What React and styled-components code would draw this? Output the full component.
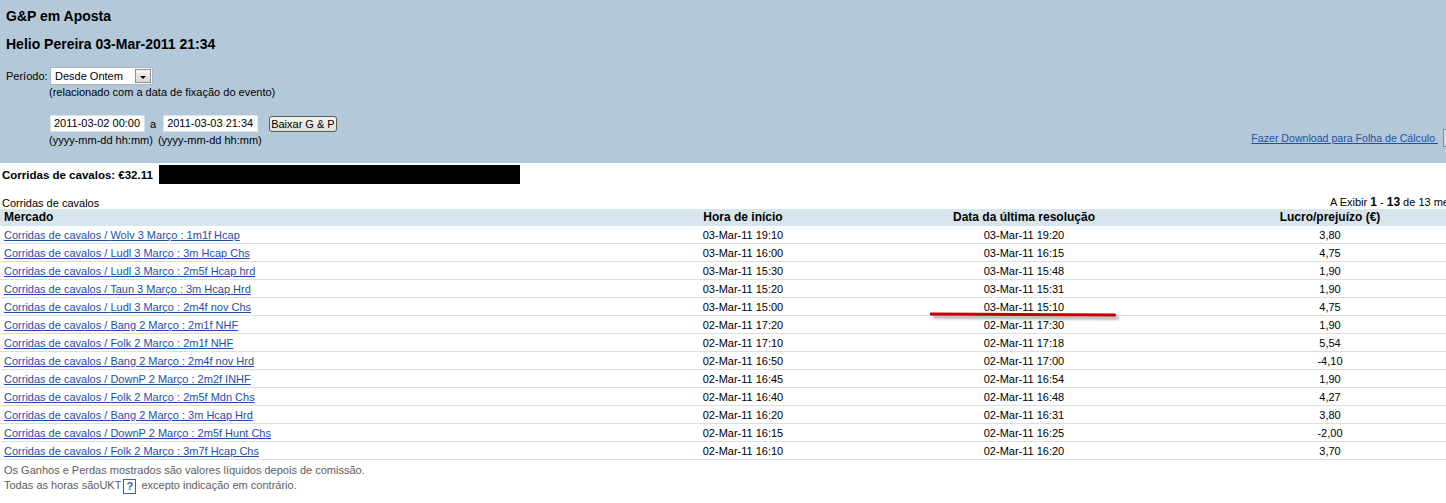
import React from "react";
import styled, { createGlobalStyle } from "styled-components";

const Global = createGlobalStyle`
  html, body { margin: 0; padding: 0; background: #fff; }
  body { font-family: "Liberation Sans", Arial, sans-serif; font-size: 11px; color: #000; overflow: hidden; width: 1446px; }
`;

const Page = styled.div`
  position: relative;
  width: 1446px;
  height: 503px;
  overflow: hidden;
`;

const Header = styled.div`
  background: #b3c9da;
  height: 163px;
  padding: 8px 6px 0 6px;
  box-sizing: border-box;
  position: relative;
`;

const Title = styled.div`
  font-size: 14px;
  font-weight: bold;
  line-height: 16px;
  margin-top: ${(p) => p.$mt || 0}px;
`;

const Row = styled.div`
  display: flex;
  align-items: center;
  gap: ${(p) => p.$gap || 0}px;
  margin-top: ${(p) => p.$mt || 0}px;
  padding-left: ${(p) => p.$pl || 0}px;
  height: ${(p) => p.$h || 14}px;
`;

const Label = styled.span`
  line-height: 14px;
  width: ${(p) => (p.$w ? p.$w + "px" : "auto")};
`;

const Sep = styled.span`
  line-height: 14px;
  margin: 0 7px 0 5px;
`;

const Spacer = styled.span`
  width: ${(p) => p.$w}px;
`;

const Select = styled.div`
  width: 103px;
  height: 18px;
  background: #fff;
  border: 1px solid #a5b6c4;
  box-sizing: border-box;
  display: flex;
  align-items: center;
  justify-content: space-between;
  padding: 0 1px 0 4px;
`;

const SelectBtn = styled.div`
  width: 16px;
  height: 14px;
  background: linear-gradient(#f4f4f4, #d8d8d8);
  border: 1px solid #8e8e8e;
  box-sizing: border-box;
  display: flex;
  align-items: center;
  justify-content: center;
`;

const Arrow = styled.div`
  width: 0;
  height: 0;
  border-left: 3px solid transparent;
  border-right: 3px solid transparent;
  border-top: 3px solid #000;
  margin-top: 2px;
`;

const Input = styled.div`
  width: 95px;
  height: 17px;
  background: #fff;
  border: 1px solid #d9e3ea;
  box-sizing: border-box;
  padding-left: 3px;
  line-height: 15px;
`;

const Button = styled.div`
  height: 16px;
  padding: 0 1px;
  background: linear-gradient(#f6f6f2, #e0e0da);
  border: 1px solid #5a5a5a;
  border-radius: 3px;
  line-height: 14px;
  box-sizing: border-box;
`;

const DownloadWrap = styled.div`
  position: absolute;
  right: 0;
  bottom: 16px;
  display: flex;
  align-items: center;
  gap: 5px;
`;

const Link = styled.a`
  color: #1f4ea6;
  text-decoration: underline;
  cursor: pointer;
  white-space: pre;
`;

const DownloadLink = styled(Link)`
  font-size: 10.6px;
`;

const CutBox = styled.div`
  width: 2px;
  height: 16px;
  border: 1px solid #7b8e9c;
  border-right: none;
  background: #d3dee6;
`;

const Summary = styled.div`
  display: flex;
  align-items: center;
  height: 19px;
  margin-top: 2px;
  padding-left: 2px;
  font-weight: bold;
  font-size: 11.5px;
  gap: 6px;
`;

const Redact = styled.div`
  width: 361px;
  height: 19px;
  background: #000;
`;

const Caption = styled.div`
  display: flex;
  justify-content: space-between;
  align-items: flex-end;
  padding-left: 2px;
  margin-top: 10px;
  height: 15px;
  width: 1480px;
  white-space: nowrap;
`;

const Pager = styled.span`
  b { font-size: 12px; }
`;

const Table = styled.div`
  width: 1478px;
  display: grid;
  grid-template-columns: 620px 246px 316px 296px;
`;

const HeadCell = styled.div`
  background: #d8e5ec;
  font-weight: bold;
  font-size: 12px;
  height: 17px;
  line-height: 17px;
  padding-left: ${(p) => (p.$left ? "4px" : "0")};
  text-align: ${(p) => (p.$left ? "left" : "center")};
`;

const Cell = styled.div`
  height: 18px;
  line-height: 18px;
  border-bottom: 1px solid #dedede;
  box-sizing: border-box;
  padding-left: ${(p) => (p.$left ? "4px" : "0")};
  text-align: ${(p) => (p.$left ? "left" : "center")};
  white-space: nowrap;
`;

const Foot = styled.div`
  color: #5d5d5d;
  padding-left: 4px;
  margin-top: 3px;
  line-height: 15px;
`;

const Help = styled.span`
  display: inline-block;
  width: 11px;
  height: 13px;
  border: 1px solid #2a64b0;
  color: #2a64b0;
  font-weight: bold;
  text-align: center;
  line-height: 13px;
  margin: 0 5px 0 2px;
  vertical-align: middle;
`;

const Annotation = styled.div`
  position: absolute;
  left: 930px;
  top: 313px;
  width: 186px;
  height: 3px;
  background: #c40000;
  border-radius: 1px;
  transform: rotate(0.3deg);
  box-shadow: 3px 3px 3px rgba(0, 0, 0, 0.35);
`;

const rows = [
  ["Wolv 3 Março : 1m1f Hcap", "03-Mar-11 19:10", "03-Mar-11 19:20", "3,80"],
  ["Ludl 3 Março : 3m Hcap Chs", "03-Mar-11 16:00", "03-Mar-11 16:15", "4,75"],
  ["Ludl 3 Março : 2m5f Hcap hrd", "03-Mar-11 15:30", "03-Mar-11 15:48", "1,90"],
  ["Taun 3 Março : 3m Hcap Hrd", "03-Mar-11 15:20", "03-Mar-11 15:31", "1,90"],
  ["Ludl 3 Março : 2m4f nov Chs", "03-Mar-11 15:00", "03-Mar-11 15:10", "4,75"],
  ["Bang 2 Março : 2m1f NHF", "02-Mar-11 17:20", "02-Mar-11 17:30", "1,90"],
  ["Folk 2 Março : 2m1f NHF", "02-Mar-11 17:10", "02-Mar-11 17:18", "5,54"],
  ["Bang 2 Março : 2m4f nov Hrd", "02-Mar-11 16:50", "02-Mar-11 17:00", "-4,10"],
  ["DownP 2 Março : 2m2f INHF", "02-Mar-11 16:45", "02-Mar-11 16:54", "1,90"],
  ["Folk 2 Março : 2m5f Mdn Chs", "02-Mar-11 16:40", "02-Mar-11 16:48", "4,27"],
  ["Bang 2 Março : 3m Hcap Hrd", "02-Mar-11 16:20", "02-Mar-11 16:31", "3,80"],
  ["DownP 2 Março : 2m5f Hunt Chs", "02-Mar-11 16:15", "02-Mar-11 16:25", "-2,00"],
  ["Folk 2 Março : 3m7f Hcap Chs", "02-Mar-11 16:10", "02-Mar-11 16:20", "3,70"],
];

export default function App() {
  return (
    <Page>
      <Global />
      <Header>
        <Title>G&amp;P em Aposta</Title>
        <Title $mt={12}>Helio Pereira 03-Mar-2011 21:34</Title>
        <Row $mt={15} $h={18}>
          <Label $w={44}>Período:</Label>
          <Select>
            <span>Desde Ontem</span>
            <SelectBtn>
              <Arrow />
            </SelectBtn>
          </Select>
        </Row>
        <Row $pl={43}>
          <Label>(relacionado com a data de fixação do evento)</Label>
        </Row>
        <Row $mt={16} $h={17} $pl={44}>
          <Input>2011-03-02 00:00</Input>
          <Sep>a</Sep>
          <Input>2011-03-03 21:34</Input>
          <Spacer $w={11} />
          <Button>Baixar G &amp; P</Button>
        </Row>
        <Row $pl={43} $mt={1} $gap={5}>
          <Label>(yyyy-mm-dd hh:mm)</Label>
          <Label>(yyyy-mm-dd hh:mm)</Label>
        </Row>
        <DownloadWrap>
          <DownloadLink>Fazer Download para Folha de Cálculo </DownloadLink>
          <CutBox />
        </DownloadWrap>
      </Header>
      <Summary>
        <span>Corridas de cavalos: €32.11</span>
        <Redact />
      </Summary>
      <Caption>
        <span>Corridas de cavalos</span>
        <Pager>
          A Exibir <b>1</b> - <b>13</b> de 13 mercados
        </Pager>
      </Caption>
      <Table>
        <HeadCell $left>Mercado</HeadCell>
        <HeadCell>Hora de início</HeadCell>
        <HeadCell>Data da última resolução</HeadCell>
        <HeadCell>Lucro/prejuízo (€)</HeadCell>
        {rows.map((r, i) => (
          <React.Fragment key={i}>
            <Cell $left>
              <Link>Corridas de cavalos / {r[0]}</Link>
            </Cell>
            <Cell>{r[1]}</Cell>
            <Cell>{r[2]}</Cell>
            <Cell>{r[3]}</Cell>
          </React.Fragment>
        ))}
      </Table>
      <Foot>
        Os Ganhos e Perdas mostrados são valores líquidos depois de comissão.
        <br />
        Todas as horas sãoUKT<Help>?</Help>excepto indicação em contrário.
      </Foot>
      <Annotation />
    </Page>
  );
}
